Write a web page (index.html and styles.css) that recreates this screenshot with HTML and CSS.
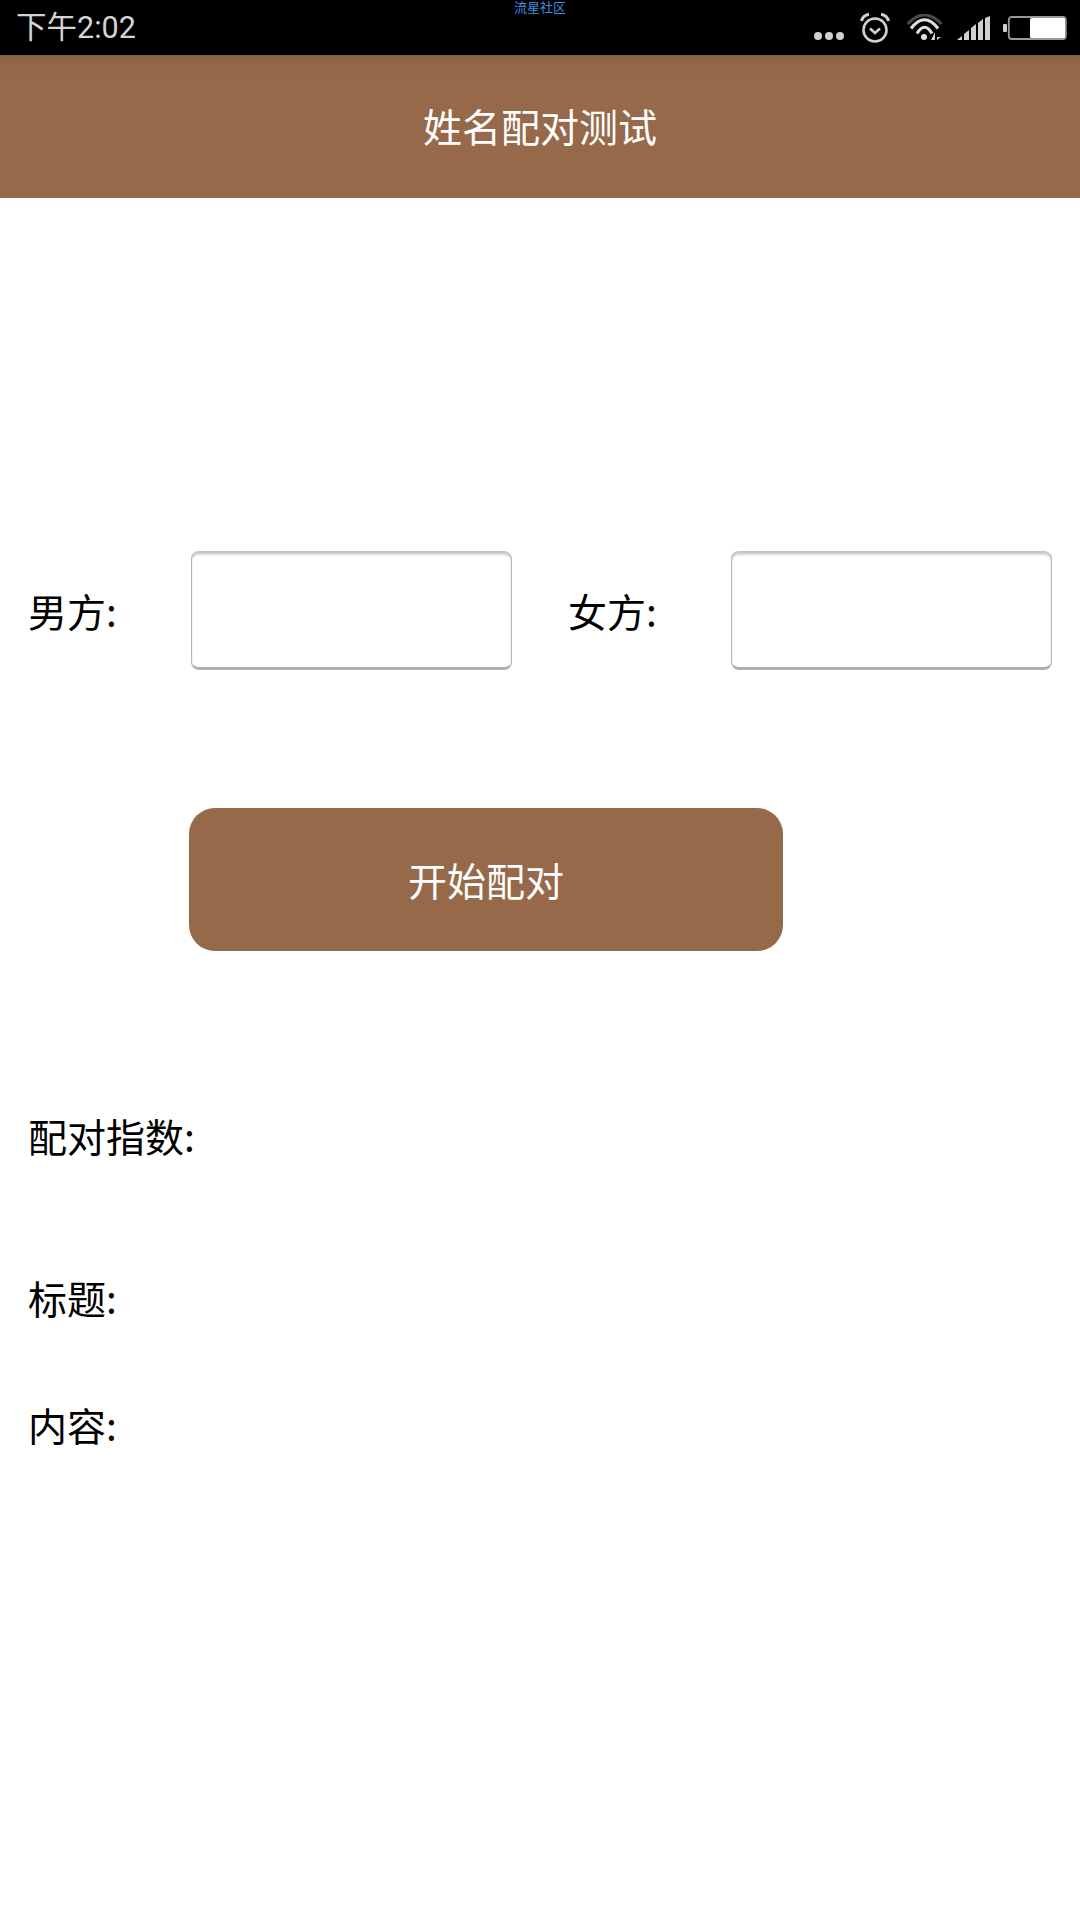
FILE: index.html
```html
<!DOCTYPE html>
<html lang="zh-CN">
<head>
<meta charset="utf-8">
<title>姓名配对测试</title>
<link rel="stylesheet" href="styles.css">
</head>
<body>
<div class="screen">
  <header class="status">
    <span class="time">下午2:02</span>
    <span class="community">流星社区</span>
    <div class="icons">
      <svg class="i-dots" width="30" height="10" viewBox="0 0 30 10"><g fill="#d0d0d0"><circle cx="4" cy="5" r="4"/><circle cx="15" cy="5" r="4"/><circle cx="26" cy="5" r="4"/></g></svg>
      <svg class="i-alarm" width="32" height="32" viewBox="0 0 32 32"><g fill="none" stroke="#d0d0d0"><circle cx="16" cy="18" r="11.500" stroke-width="2.600"/><path d="M11 16.500l5 4.500 5-4.500" stroke-width="2.600"/><path d="M2.500 9C3.500 5 6 2.800 10 2.200M29.500 9C28.500 5 26 2.800 22 2.200" stroke-width="3"/></g></svg>
      <svg class="i-wifi" width="36" height="27" viewBox="0 0 36 27"><g fill="none"><path d="M0.500 10Q17.500 -8 34.500 10" stroke="#4a4a4a" stroke-width="3"/><path d="M4 14.500Q17.500 -3 31 14.500" stroke="#e0e0e0" stroke-width="3.200"/><path d="M10 19.500Q17.500 7 25 19.500" stroke="#e0e0e0" stroke-width="3.200"/></g><circle cx="17" cy="23" r="3" fill="#e0e0e0"/><path d="M28 26v-8l-4 8zM30 18v8l4-3h-4z" fill="#d0d0d0"/></svg>
      <svg class="i-signal" width="34" height="24" viewBox="0 0 34 24"><g fill="#d0d0d0"><path d="M0 24l5-4v4zM7 24v-6l5-4v10zM14 24V12l5-4v16zM21 24V7l5-4v21zM28 24V2l5-2v24z"/></g></svg>
      <svg class="i-battery" width="64" height="24" viewBox="0 0 64 24"><rect x="0" y="8" width="4" height="8" rx="1" fill="#d0d0d0"/><rect x="5.800" y="1" width="57" height="22" rx="3" fill="#000" stroke="#9a9a9a" stroke-width="1.800"/><rect x="27" y="2" width="35" height="20" rx="1.500" fill="#fff"/></svg>
    </div>
  </header>
  <div class="appbar"><h1 class="title">姓名配对测试</h1></div>
  <main class="content">
    <div class="form-row">
      <label class="label field-label">男方:</label>
      <div class="input"></div>
      <label class="label field-label second">女方:</label>
      <div class="input"></div>
    </div>
    <button class="start" type="button">开始配对</button>
    <p class="label score">配对指数:</p>
    <p class="label heading">标题:</p>
    <p class="label body-text">内容:</p>
  </main>
</div>
</body>
</html>
```
FILE: styles.css
```css
* { box-sizing: border-box; }
html, body { margin: 0; padding: 0; background: #fff; }
body { font-family: "Noto Sans CJK SC", "Roboto", sans-serif; }
.screen { width: 1080px; height: 1920px; display: flex; flex-direction: column; overflow: hidden; background: #fff; }

.status { position: relative; height: 55px; flex: none; background: #000; display: flex; align-items: center; justify-content: space-between; padding: 0 13px 0 16px; }
.time { font-family: "Roboto", "Noto Sans CJK SC", sans-serif; font-size: 30.5px; line-height: 55px; color: #d4d4d4; }
.community { position: absolute; left: 514px; top: 0; font-family: "Roboto", "Noto Sans CJK SC", sans-serif; font-size: 13px; line-height: 15px; color: #3d8fe0; }
.icons { display: flex; align-items: flex-start; height: 55px; }
.i-dots { margin: 31px 0 0 1px; }
.i-alarm { margin: 12px 0 0 15px; }
.i-wifi { margin: 14px 0 0 16px; }
.i-signal { margin: 16px 0 0 14px; }
.i-battery { margin: 16px 0 0 12px; }

.appbar { height: 143px; flex: none; display: flex; align-items: center; justify-content: center; padding-bottom: 2px; background: linear-gradient(#85603f 0, #916646 6px, #96694a 24px, #96694a 100%); }
.title { margin: 0; font-size: 39px; line-height: 1; font-weight: 400; color: #fff; }

.content { flex: 1; display: flex; flex-direction: column; align-items: flex-start; padding: 353px 0 0 28px; }
.label { margin: 0; font-size: 39px; line-height: 56px; color: #000; font-family: "Noto Sans CJK SC", "Roboto", sans-serif; }
.form-row { display: flex; align-items: center; height: 119px; }
.field-label { width: 163px; height: 58px; }
.field-label.second { margin-left: 56px; }
.input { width: 321px; height: 119px; background: #fff; border: 1px solid #b3b6b8; border-top: 2px solid #c2c5c6; border-bottom: 3px solid #aeb1b3; border-radius: 8px; box-shadow: inset 0 2px 2px #d4d6d7; }

.start { width: 594px; height: 143px; margin: 138px 0 0 161px; padding: 0 0 2px; border: 0; border-radius: 26px; background: #96694a; color: #fff; font: 400 39px "Noto Sans CJK SC", sans-serif; }
.score { margin-top: 156px; }
.heading { margin-top: 106px; }
.body-text { margin-top: 71px; }
```
